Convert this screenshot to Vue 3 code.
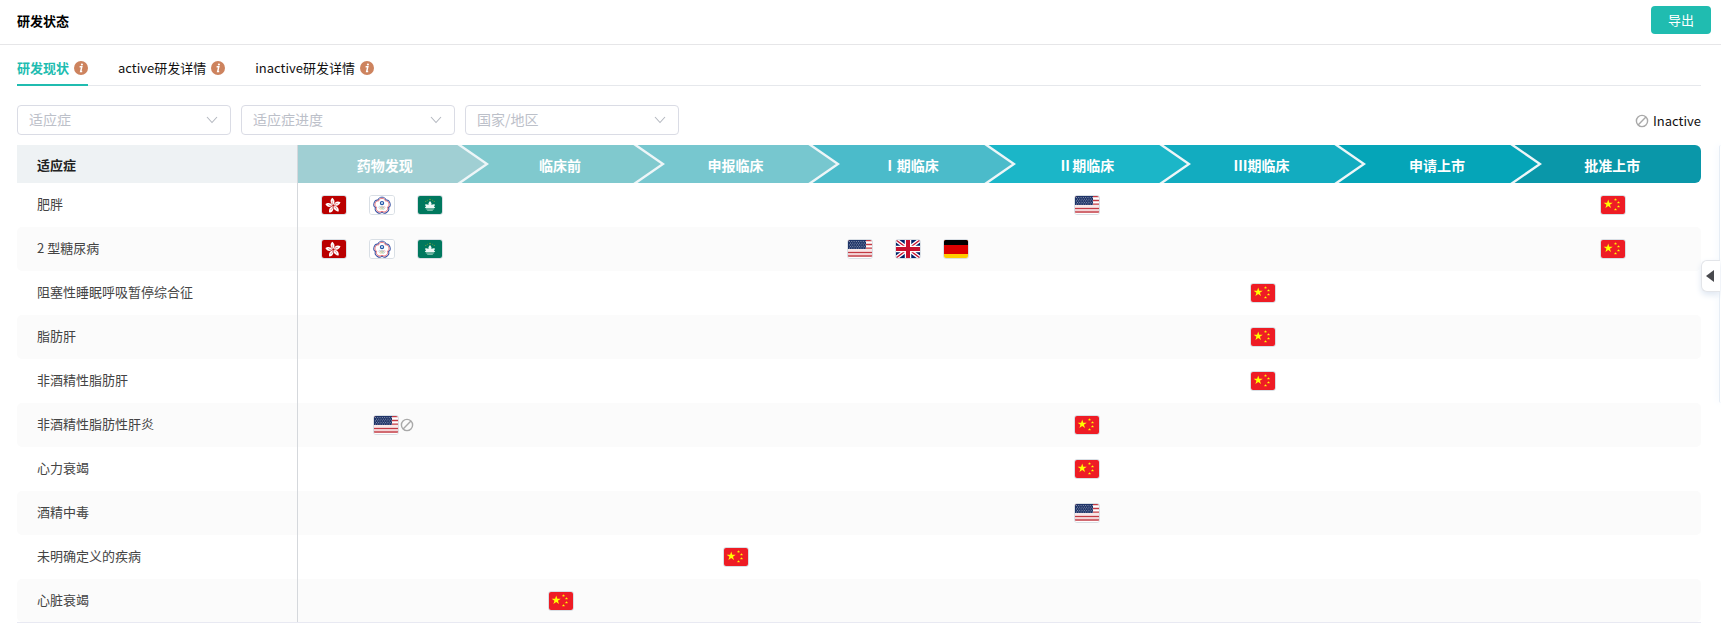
<script setup>
import { ref } from 'vue'

const tabs = [
  { key: 'status', label: '研发现状' },
  { key: 'active', label: 'active研发详情' },
  { key: 'inactive', label: 'inactive研发详情' },
]
const activeTab = ref('status')

const filters = ['适应症', '适应症进度', '国家/地区']

const stages = ['药物发现', '临床前', '申报临床', 'Ⅰ期临床', 'Ⅱ期临床', 'Ⅲ期临床', '申请上市', '批准上市']

const rows = [
  { name: '肥胖', cells: { 0: ['hk', 'tw', 'mo'], 4: ['us'], 7: ['cn'] } },
  { name: '2 型糖尿病', cells: { 0: ['hk', 'tw', 'mo'], 3: ['us', 'gb', 'de'], 7: ['cn'] } },
  { name: '阻塞性睡眠呼吸暂停综合征', cells: { 5: ['cn'] } },
  { name: '脂肪肝', cells: { 5: ['cn'] } },
  { name: '非酒精性脂肪肝', cells: { 5: ['cn'] } },
  { name: '非酒精性脂肪性肝炎', cells: { 0: ['us'], 4: ['cn'] }, inactive: 0 },
  { name: '心力衰竭', cells: { 4: ['cn'] } },
  { name: '酒精中毒', cells: { 4: ['us'] } },
  { name: '未明确定义的疾病', cells: { 2: ['cn'] } },
  { name: '心脏衰竭', cells: { 1: ['cn'] } },
]
</script>

<template>
  <svg class="defs" aria-hidden="true">
    <defs>
      <path id="star" d="M0-1L.225-.309H.951L.363.118L.588.809L0 .382L-.588.809L-.363.118L-.951-.309H-.225Z" />
      <symbol id="flag-cn" viewBox="0 0 24 18">
        <rect width="24" height="18" fill="#ee1c25" />
        <g fill="#ffff00">
          <use href="#star" transform="translate(7.2 8.2) scale(4.8)" />
          <use href="#star" transform="translate(14.5 3.7) scale(1.6)" />
          <use href="#star" transform="translate(17.5 6.5) scale(1.6)" />
          <use href="#star" transform="translate(17.5 10.5) scale(1.6)" />
          <use href="#star" transform="translate(14.5 13.5) scale(1.6)" />
        </g>
      </symbol>
      <symbol id="flag-us" viewBox="0 0 24 18">
        <rect width="24" height="18" fill="#fff" />
        <path d="M0 .7H24M0 4.5H24M0 8.2H24M0 12.5H24M0 16H24" stroke="#c23a43" stroke-width="1.3" />
        <path d="M0 10H24M0 14.4H24" stroke="#eec4c7" stroke-width=".8" />
        <rect width="18" height="9" fill="#203569" />
        <path d="M1 1.5H18M2 3.2H18M1 4.9H18M2 6.6H18M1 8.1H18" stroke="#fff" stroke-width=".8" stroke-dasharray=".9 1.4" opacity=".65" />
      </symbol>
      <symbol id="flag-gb" viewBox="0 0 24 18">
        <rect width="24" height="18" fill="#012169" />
        <path d="M0 0L24 18M24 0L0 18" stroke="#fff" stroke-width="4" />
        <path d="M0 0L24 18M24 0L0 18" stroke="#c8102e" stroke-width="1.3" />
        <path d="M12 0V18M0 9H24" stroke="#fff" stroke-width="6.5" />
        <path d="M12 0V18M0 9H24" stroke="#c8102e" stroke-width="4" />
      </symbol>
      <symbol id="flag-de" viewBox="0 0 24 18">
        <rect width="24" height="18" fill="#fc0" />
        <rect width="24" height="14" fill="#d00" />
        <rect width="24" height="5" fill="#000" />
      </symbol>
      <symbol id="flag-hk" viewBox="0 0 24 18">
        <rect width="24" height="18" fill="#ba0000" />
        <g transform="translate(11.2 9.6)">
          <g v-for="n in 5" :key="n" :transform="`rotate(${n * 72 - 8})`">
            <path d="M0-.6C-2.4-2.4-3-5.8 .2-8C1.6-6.6 3.2-3.6 0-.6Z" fill="#fff" />
            <path d="M0-1.6C-.8-2.6-.6-4 .3-5" fill="none" stroke="#ba0000" stroke-width=".4" />
          </g>
        </g>
      </symbol>
      <symbol id="flag-tw" viewBox="0 0 24 18">
        <rect width="24" height="18" fill="#fff" />
        <g transform="translate(12 9.5)" fill="none">
          <g v-for="n in 5" :key="n" :transform="`rotate(${n * 72})`">
            <path d="M-4-5.2C-3.8-9.4 3.8-9.4 4-5.2" stroke="#3a55a6" stroke-width="1" />
            <path d="M-3.3-4.6C-3-8 3-8 3.3-4.6" stroke="#e66b72" stroke-width=".9" />
          </g>
          <circle cy="-2.4" r="2.2" fill="#2358a6" />
          <circle cy="-2.4" r="1" fill="#dce8fa" />
          <circle cx="-2.2" cy="1.8" r="1" stroke="#8fb7dd" stroke-width=".5" />
          <circle cy="1.8" r="1" stroke="#999" stroke-width=".5" />
          <circle cx="2.2" cy="1.8" r="1" stroke="#e5949a" stroke-width=".5" />
          <circle cx="-1.1" cy="3" r="1" stroke="#e3c86e" stroke-width=".5" />
          <circle cx="1.1" cy="3" r="1" stroke="#8cc59c" stroke-width=".5" />
        </g>
      </symbol>
      <symbol id="flag-mo" viewBox="0 0 24 18">
        <rect width="24" height="18" fill="#00785e" />
        <g fill="#fbd116" opacity=".8">
          <use href="#star" transform="translate(12 3.5) scale(1)" />
          <use href="#star" transform="translate(9.3 4.1) scale(.7)" />
          <use href="#star" transform="translate(14.7 4.1) scale(.7)" />
          <use href="#star" transform="translate(7.8 5.4) scale(.7)" />
          <use href="#star" transform="translate(16.2 5.4) scale(.7)" />
        </g>
        <path d="M12 5C10.4 6.6 10.2 7.8 10.6 9C9.6 8.4 8.4 8.2 7.2 8.4C7.2 9.6 7.6 10.4 8.2 11H6.8C7.1 11.6 7.3 11.9 7.6 12.1H16.4C16.7 11.9 16.9 11.6 17.2 11H15.8C16.4 10.4 16.8 9.6 16.8 8.4C15.6 8.2 14.4 8.4 13.4 9C13.8 7.8 13.6 6.6 12 5Z" fill="#eef8f5" />
        <path d="M7.8 12.9H16.2M9.2 14.2H14.8" stroke="#a5d5c5" stroke-width="1" />
      </symbol>
      <symbol id="ban" viewBox="0 0 14 14">
        <circle cx="7" cy="7" r="5.6" fill="none" stroke="#a9a9a9" stroke-width="1.4" />
        <path d="M3.1 10.9L10.9 3.1" stroke="#a9a9a9" stroke-width="1.4" />
      </symbol>
    </defs>
  </svg>

  <main class="page">
    <header class="head">
      <h1>研发状态</h1>
      <button type="button" class="export">导出</button>
    </header>

    <section class="body">
      <nav class="tabs" role="tablist">
        <button
          v-for="tab in tabs"
          :key="tab.key"
          type="button"
          role="tab"
          class="tab"
          :class="{ active: tab.key === activeTab }"
          :aria-selected="tab.key === activeTab"
          @click="activeTab = tab.key"
        >
          <span>{{ tab.label }}</span>
          <svg class="info" viewBox="0 0 14 14" aria-hidden="true">
            <circle cx="7" cy="7" r="7" fill="#cd835e" />
            <circle cx="7.9" cy="3.5" r="1.1" fill="#fff" />
            <path d="M5.6 5.8H7.8L6.7 10.4H8.2" fill="none" stroke="#fff" stroke-width="1.5" />
          </svg>
        </button>
      </nav>

      <div class="toolbar">
        <div class="filters">
          <label v-for="filter in filters" :key="filter" class="filter">
            <select :aria-label="filter">
              <option>{{ filter }}</option>
            </select>
            <svg class="caret" viewBox="0 0 12 8" aria-hidden="true">
              <path d="M1 1L6 6.5L11 1" fill="none" stroke="#b4b8c0" stroke-width="1.1" />
            </svg>
          </label>
        </div>
        <div class="legend">
          <svg class="ban" aria-hidden="true"><use href="#ban" /></svg>
          <span>Inactive</span>
        </div>
      </div>

      <table class="grid">
        <thead>
          <tr>
            <th class="name" scope="col">适应症</th>
            <th v-for="(stage, i) in stages" :key="stage" scope="col" class="stage" :class="`stage-${i}`">
              {{ stage }}
              <svg v-if="i < stages.length - 1" class="arrow" viewBox="0 0 32 38" aria-hidden="true">
                <path d="M0 0H3L30 19L3 38H0Z" fill="currentColor" />
                <path d="M1-1L30 19L1 39" fill="none" stroke="#eef6f8" stroke-width="2.4" />
              </svg>
            </th>
          </tr>
        </thead>
        <tbody>
          <tr v-for="row in rows" :key="row.name">
            <th class="name" scope="row">{{ row.name }}</th>
            <td v-for="(stage, i) in stages" :key="stage">
              <div v-if="row.cells[i]" class="flags" :class="{ several: row.cells[i].length > 1 }">
                <span v-for="code in row.cells[i]" :key="code" class="flag">
                  <svg class="picture" role="img" :aria-label="code"><use :href="`#flag-${code}`" /></svg>
                  <svg v-if="row.inactive === i" class="ban mark" role="img" aria-label="Inactive"><use href="#ban" /></svg>
                </span>
              </div>
            </td>
          </tr>
        </tbody>
      </table>
    </section>

    <aside class="drawer">
      <button type="button" class="handle" aria-label="展开">
        <svg viewBox="0 0 8 12" aria-hidden="true"><path d="M8 0V12L0 6Z" fill="#48494d" /></svg>
      </button>
    </aside>
  </main>
</template>

<style>
body {
  background: #fff;
  overflow: hidden;
}
</style>

<style scoped>
.defs {
  position: absolute;
  width: 0;
  height: 0;
}
.page,
.page button,
.page select {
  font-family: "Noto Sans CJK SC", "Noto Sans", sans-serif;
}
.page {
  font-size: 13px;
  line-height: 20px;
  color: #111;
}
.head {
  display: flex;
  align-items: center;
  justify-content: space-between;
  box-sizing: border-box;
  height: 45px;
  padding: 0 10px 4px 17px;
  border-bottom: 1px solid #e6e6e8;
}
h1 {
  margin: 0;
  padding-top: 2px;
  font-size: 13px;
  line-height: 20px;
  font-weight: 700;
  color: #000;
}
.export {
  width: 60px;
  height: 28px;
  padding: 0 0 2px;
  border: 0;
  border-radius: 4px;
  background: #20bcb0;
  color: #fff;
  font-size: 13px;
}
.body {
  padding: 0 20px 0 17px;
}
.tabs {
  display: flex;
  gap: 30px;
  box-shadow: inset 0 -1px #e6e8ec;
}
.tab {
  display: flex;
  align-items: center;
  gap: 5px;
  padding: 13px 0 6px;
  border: 0;
  border-bottom: 2px solid transparent;
  background: none;
  color: #111;
  font-size: 13px;
  line-height: 20px;
}
.tab.active {
  border-color: #20bcb0;
  color: #20bcb0;
  font-weight: 700;
}
.info {
  width: 14px;
  height: 14px;
}
.toolbar {
  display: flex;
  align-items: center;
  justify-content: space-between;
  padding: 19px 0 10px;
}
.filters {
  display: flex;
  gap: 10px;
}
.filter {
  position: relative;
}
.filter select {
  display: block;
  appearance: none;
  box-sizing: border-box;
  width: 214px;
  height: 30px;
  padding: 0 30px 2px 11px;
  border: 1px solid #dadce5;
  border-radius: 4px;
  background: #fff;
  color: #bcc0c9;
  font-size: 14px;
}
.caret {
  position: absolute;
  right: 13px;
  top: 11px;
  width: 12px;
  height: 8px;
  pointer-events: none;
}
.legend {
  display: flex;
  align-items: center;
  gap: 4px;
  padding-top: 2px;
}
.ban {
  width: 14px;
  height: 14px;
}
.grid {
  width: 100%;
  table-layout: fixed;
  border-collapse: separate;
  border-spacing: 0;
  border-bottom: 1px solid #e8e9f2;
}
.grid th,
.grid td {
  box-sizing: border-box;
  padding: 0;
}
.grid .name {
  width: 281px;
  padding: 0 0 2px 20px;
  border-right: 1px solid #d5d8dc;
  text-align: left;
}
.grid thead th {
  height: 38px;
}
.grid thead .name {
  padding: 2px 0 0 20px;
  background: #eef2f4;
  color: #222;
}
.grid .stage {
  position: relative;
  padding: 2px 2px 0 0;
  color: #fff;
  font-size: 14px;
  text-align: center;
}
.arrow {
  position: absolute;
  top: 0;
  right: -16px;
  z-index: 1;
  width: 32px;
  height: 38px;
}
/* The strip behind each outgoing arrow takes the next stage's colour. */
.stage-0 { background: linear-gradient(to right, #a0cfd3 calc(100% - 16px), #80c9ce 0); }
.stage-1 { background: linear-gradient(to right, #80c9ce calc(100% - 16px), #77c7cf 0); }
.stage-2 { background: linear-gradient(to right, #77c7cf calc(100% - 16px), #4bbbca 0); }
.stage-3 { background: linear-gradient(to right, #4bbbca calc(100% - 16px), #1bb6c8 0); }
.stage-4 { background: linear-gradient(to right, #1bb6c8 calc(100% - 16px), #12acc0 0); }
.stage-5 { background: linear-gradient(to right, #12acc0 calc(100% - 16px), #05a5b8 0); }
.stage-6 { background: linear-gradient(to right, #05a5b8 calc(100% - 16px), #0a97a9 0); }
.stage-7 { background: #0a97a9; border-radius: 0 6px 6px 0; }
.stage-0 .arrow { color: #a0cfd3; }
.stage-1 .arrow { color: #80c9ce; }
.stage-2 .arrow { color: #77c7cf; }
.stage-3 .arrow { color: #4bbbca; }
.stage-4 .arrow { color: #1bb6c8; }
.stage-5 .arrow { color: #12acc0; }
.stage-6 .arrow { color: #05a5b8; }
tbody th,
tbody td {
  height: 44px;
}
tbody tr:last-child th,
tbody tr:last-child td {
  height: 43px;
}
tbody .name {
  color: #444;
  font-weight: 400;
}
tbody tr:nth-child(even) > * {
  background: #fbfbfb;
}
tbody tr:nth-child(even) .name {
  border-radius: 5px 0 0 5px;
}
tbody tr:nth-child(even) td:last-child {
  border-radius: 0 5px 5px 0;
}
.flags {
  display: flex;
  justify-content: center;
  gap: 22px;
}
.flags.several {
  padding-right: 8px;
}
.flag {
  position: relative;
  box-sizing: border-box;
  width: 26px;
  height: 20px;
  border: 1px solid #d9dfe5;
  border-radius: 3px;
}
.picture {
  display: block;
  width: 24px;
  height: 18px;
  border-radius: 2px;
}
.mark {
  position: absolute;
  left: 26px;
  top: 2px;
}
.drawer {
  position: fixed;
  top: 145px;
  right: 0;
  box-sizing: border-box;
  width: 2px;
  height: 258px;
  border-left: 1px solid #e6edf5;
  border-radius: 6px 0 0 6px;
  box-shadow: 0 0 8px #e3edf8;
}
.handle {
  position: absolute;
  right: 1px;
  top: 115px;
  display: flex;
  align-items: center;
  box-sizing: border-box;
  width: 19px;
  height: 32px;
  padding: 0 0 0 4px;
  border: 1px solid #e3e5e9;
  border-right: 0;
  border-radius: 6px 0 0 6px;
  background: #fff;
  box-shadow: 0 3px 6px #dfe7f2;
}
.handle svg {
  width: 8px;
  height: 12px;
}
</style>
